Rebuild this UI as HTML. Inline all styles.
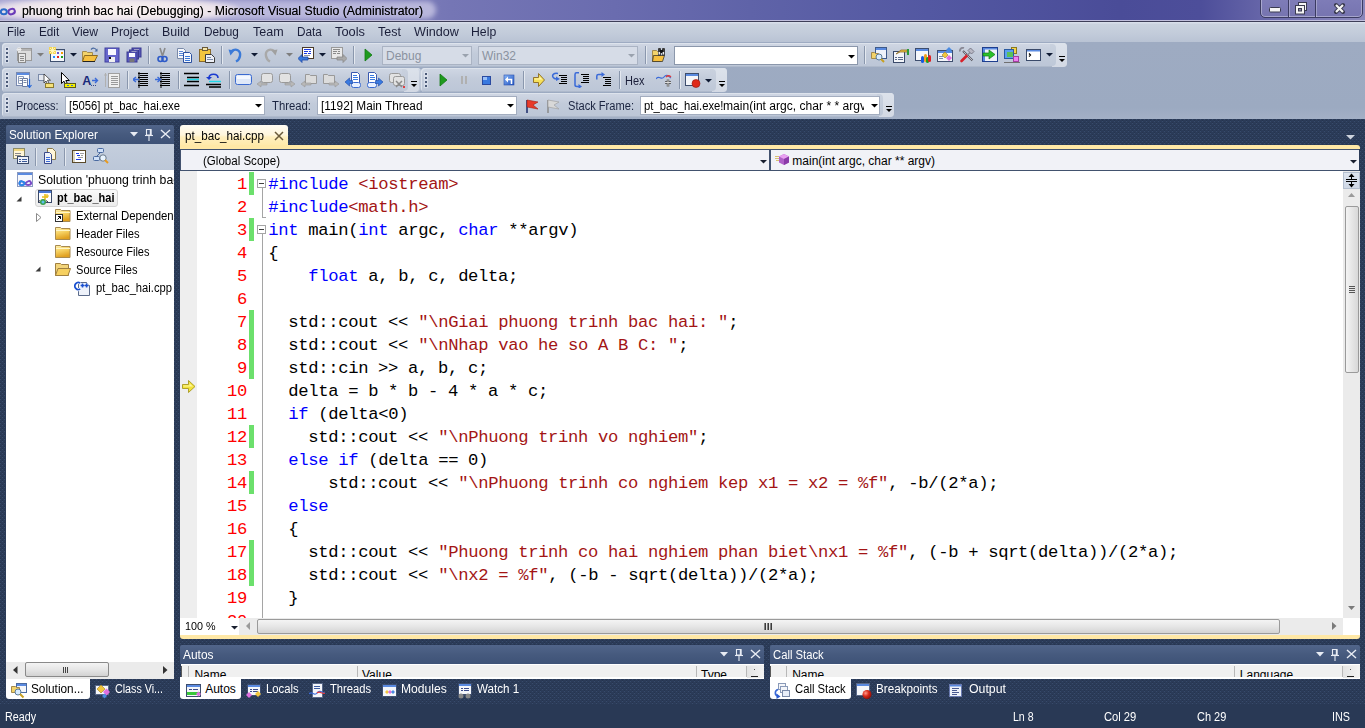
<!DOCTYPE html>
<html><head><meta charset="utf-8">
<style>
*{margin:0;padding:0;box-sizing:border-box}
html,body{width:1365px;height:728px;overflow:hidden}
body{position:relative;background:#293955;font-family:"Liberation Sans",sans-serif;font-size:12px;color:#000}
.a{position:absolute}
.t{position:absolute;white-space:pre;line-height:1}
</style></head><body>
<svg class="a" style="left:0;top:0" width="1365" height="728"><defs><pattern id="dots" x="0" y="0" width="4" height="4" patternUnits="userSpaceOnUse">
<rect width="4" height="4" fill="#2b3b58"/><rect x="2" y="0" width="1" height="1" fill="#26354f"/><rect x="2" y="1" width="1" height="1" fill="#384b6b"/>
<rect x="0" y="2" width="1" height="1" fill="#26354f"/><rect x="0" y="3" width="1" height="1" fill="#384b6b"/></pattern></defs>
<rect x="0" y="119" width="1365" height="585" fill="url(#dots)"/><rect x="0" y="704" width="1365" height="24" fill="#293955"/></svg>
<div class="a" style="left:0px;top:0px;width:1365px;height:21px;background:linear-gradient(90deg,#a4a2d0 0%,#8f8ec4 20%,#7576b5 33%,#6a6caf 45%,#5f63a8 55%,#5358a2 68%,#4a4c98 82%,#4d4e9a 88%,#7a78b4 96%,#8a88bc 100%)"></div>
<div class="a" style="left:-6px;top:1px;width:442px;height:18px;border-radius:9px;background:rgba(190,188,222,0.92);filter:blur(2.5px)"></div>
<div class="a" style="left:-10px;top:-3px;width:250px;height:26px;border-radius:50%;background:radial-gradient(ellipse at center,rgba(255,246,242,0.95) 0%,rgba(248,238,238,0.85) 55%,rgba(230,222,238,0) 100%);filter:blur(2px)"></div>
<div class="a" style="left:0px;top:20px;width:1365px;height:1px;background:#c0bedc"></div>
<div class="a" style="left:0px;top:21px;width:1365px;height:1px;background:#3e3e58"></div>
<svg class="a" style="left:0px;top:6px;" width="18" height="12" viewBox="0 0 18 12"><ellipse cx="11.6" cy="5.6" rx="3.3" ry="2.6" transform="rotate(-20 11.6 5.6)" fill="none" stroke="#6a3ab8" stroke-width="2"/><ellipse cx="3.8" cy="5.8" rx="3" ry="2.5" fill="none" stroke="#2a6ac8" stroke-width="2"/></svg>
<div class="t" style="left:21.5px;top:5.04px;font-size:12px;color:#000;transform:scaleX(1.0213);transform-origin:0 0;text-shadow:0 0 0.6px rgba(0,0,0,0.6);">phuong trinh bac hai (Debugging) - Microsoft Visual Studio (Administrator)</div>
<div class="a" style="left:1260px;top:-3px;width:103px;height:21px;border:1px solid #3b3b62;border-radius:0 0 5px 5px;box-shadow:inset 0 0 0 1px rgba(255,255,255,0.35);background:linear-gradient(#7f7db8,#7674b0)"></div>
<div class="a" style="left:1288px;top:0px;width:1px;height:17px;background:#3b3b62;box-shadow:1px 0 0 rgba(255,255,255,0.3)"></div>
<div class="a" style="left:1315px;top:0px;width:1px;height:17px;background:#3b3b62;box-shadow:1px 0 0 rgba(255,255,255,0.3)"></div>
<svg class="a" style="left:1268px;top:6px;" width="15" height="8" viewBox="0 0 15 8"><rect x="1.5" y="1.5" width="11" height="4.5" rx="1" fill="#f4f4f4" stroke="#3a3a50" stroke-width="1"/></svg>
<svg class="a" style="left:1294px;top:1px;" width="15" height="14" viewBox="0 0 15 14"><rect x="4.5" y="1.5" width="8" height="8" fill="#f4f4f4" stroke="#3a3a50"/><rect x="1.5" y="4.5" width="9" height="8.5" fill="#f4f4f4" stroke="#3a3a50"/><rect x="4.5" y="7.5" width="3" height="2.5" fill="#8a8aa8" stroke="#3a3a50"/></svg>
<svg class="a" style="left:1333px;top:2px;" width="13" height="12" viewBox="0 0 13 12"><path d="M3 3 L10 10 M10 3 L3 10" stroke="#3a3a50" stroke-width="4" stroke-linecap="round"/><path d="M3 3 L10 10 M10 3 L3 10" stroke="#f4f4f4" stroke-width="2.2" stroke-linecap="butt"/></svg>
<div class="a" style="left:0px;top:22px;width:1365px;height:20px;background:linear-gradient(#d8deea 0,#d8deea 1px,#cad2df 2px,#c2cbda 60%,#b9c3d4)"></div>
<div class="t" style="left:6.7px;top:25.74px;font-size:12px;color:#1b1f3a;transform:scaleX(0.9512);transform-origin:0 0;">File</div>
<div class="t" style="left:38.8px;top:25.74px;font-size:12px;color:#1b1f3a;transform:scaleX(0.9764);transform-origin:0 0;">Edit</div>
<div class="t" style="left:72.30000000000001px;top:25.74px;font-size:12px;color:#1b1f3a;transform:scaleX(1.0118);transform-origin:0 0;">View</div>
<div class="t" style="left:111.4px;top:25.74px;font-size:12px;color:#1b1f3a;transform:scaleX(1.0091);transform-origin:0 0;">Project</div>
<div class="t" style="left:162.4px;top:25.74px;font-size:12px;color:#1b1f3a;transform:scaleX(1.0342);transform-origin:0 0;">Build</div>
<div class="t" style="left:203.6px;top:25.74px;font-size:12px;color:#1b1f3a;transform:scaleX(0.9837);transform-origin:0 0;">Debug</div>
<div class="t" style="left:252.70000000000002px;top:25.74px;font-size:12px;color:#1b1f3a;transform:scaleX(1.0428);transform-origin:0 0;">Team</div>
<div class="t" style="left:296.5px;top:25.74px;font-size:12px;color:#1b1f3a;transform:scaleX(0.9819);transform-origin:0 0;">Data</div>
<div class="t" style="left:334.59999999999997px;top:25.74px;font-size:12px;color:#1b1f3a;transform:scaleX(1.0708);transform-origin:0 0;">Tools</div>
<div class="t" style="left:377.5px;top:25.74px;font-size:12px;color:#1b1f3a;transform:scaleX(1.0402);transform-origin:0 0;">Test</div>
<div class="t" style="left:413.7px;top:25.74px;font-size:12px;color:#1b1f3a;transform:scaleX(1.0495);transform-origin:0 0;">Window</div>
<div class="t" style="left:471.4px;top:25.74px;font-size:12px;color:#1b1f3a;transform:scaleX(1.0208);transform-origin:0 0;">Help</div>
<div class="a" style="left:0px;top:42px;width:1365px;height:77px;background:linear-gradient(#9eabc2,#9caac1 85%,#a3b0c6)"></div>
<div class="a" style="left:2px;top:43px;width:1065px;height:24px;border-radius:4px;background:linear-gradient(#d0d7e4,#c2cbda 45%,#bcc6d7);box-shadow:inset 1px 1px 0 #dde3ec,inset 0 -1px 0 #aeb9cb"></div>
<div class="a" style="left:6px;top:48px;width:2px;height:2px;background:#4b5a78;box-shadow:0 0 1px 1px rgba(235,240,248,0.6)"></div>
<div class="a" style="left:6px;top:52px;width:2px;height:2px;background:#4b5a78;box-shadow:0 0 1px 1px rgba(235,240,248,0.6)"></div>
<div class="a" style="left:6px;top:56px;width:2px;height:2px;background:#4b5a78;box-shadow:0 0 1px 1px rgba(235,240,248,0.6)"></div>
<div class="a" style="left:6px;top:60px;width:2px;height:2px;background:#4b5a78;box-shadow:0 0 1px 1px rgba(235,240,248,0.6)"></div>
<div class="a" style="left:2px;top:68px;width:419px;height:24px;border-radius:4px;background:linear-gradient(#d0d7e4,#c2cbda 45%,#bcc6d7);box-shadow:inset 1px 1px 0 #dde3ec,inset 0 -1px 0 #aeb9cb"></div>
<div class="a" style="left:6px;top:73px;width:2px;height:2px;background:#4b5a78;box-shadow:0 0 1px 1px rgba(235,240,248,0.6)"></div>
<div class="a" style="left:6px;top:77px;width:2px;height:2px;background:#4b5a78;box-shadow:0 0 1px 1px rgba(235,240,248,0.6)"></div>
<div class="a" style="left:6px;top:81px;width:2px;height:2px;background:#4b5a78;box-shadow:0 0 1px 1px rgba(235,240,248,0.6)"></div>
<div class="a" style="left:6px;top:85px;width:2px;height:2px;background:#4b5a78;box-shadow:0 0 1px 1px rgba(235,240,248,0.6)"></div>
<div class="a" style="left:421px;top:68px;width:306px;height:24px;border-radius:4px;background:linear-gradient(#d0d7e4,#c2cbda 45%,#bcc6d7);box-shadow:inset 1px 1px 0 #dde3ec,inset 0 -1px 0 #aeb9cb"></div>
<div class="a" style="left:425px;top:73px;width:2px;height:2px;background:#4b5a78;box-shadow:0 0 1px 1px rgba(235,240,248,0.6)"></div>
<div class="a" style="left:425px;top:77px;width:2px;height:2px;background:#4b5a78;box-shadow:0 0 1px 1px rgba(235,240,248,0.6)"></div>
<div class="a" style="left:425px;top:81px;width:2px;height:2px;background:#4b5a78;box-shadow:0 0 1px 1px rgba(235,240,248,0.6)"></div>
<div class="a" style="left:425px;top:85px;width:2px;height:2px;background:#4b5a78;box-shadow:0 0 1px 1px rgba(235,240,248,0.6)"></div>
<div class="a" style="left:2px;top:93px;width:892px;height:24px;border-radius:4px;background:linear-gradient(#d0d7e4,#c2cbda 45%,#bcc6d7);box-shadow:inset 1px 1px 0 #dde3ec,inset 0 -1px 0 #aeb9cb"></div>
<div class="a" style="left:6px;top:98px;width:2px;height:2px;background:#4b5a78;box-shadow:0 0 1px 1px rgba(235,240,248,0.6)"></div>
<div class="a" style="left:6px;top:102px;width:2px;height:2px;background:#4b5a78;box-shadow:0 0 1px 1px rgba(235,240,248,0.6)"></div>
<div class="a" style="left:6px;top:106px;width:2px;height:2px;background:#4b5a78;box-shadow:0 0 1px 1px rgba(235,240,248,0.6)"></div>
<div class="a" style="left:6px;top:110px;width:2px;height:2px;background:#4b5a78;box-shadow:0 0 1px 1px rgba(235,240,248,0.6)"></div>
<div class="a" style="left:1052px;top:43px;width:15px;height:24px;border-radius:0 4px 4px 0;background:linear-gradient(#dce2eb,#d3d9e4)"></div>
<div class="a" style="left:1050px;top:44px;width:6px;height:22px;border-radius:0 4px 4px 0;background:linear-gradient(#c9d1de,#bec8d8)"></div>
<svg class="a" style="left:1059px;top:56px;" width="7" height="7" viewBox="0 0 7 7"><rect x="0" y="0" width="6" height="1" fill="#000"/><path d="M0 3 H6 L3 6 Z" fill="#000"/></svg>
<div class="a" style="left:404px;top:68px;width:15px;height:24px;border-radius:0 4px 4px 0;background:linear-gradient(#dce2eb,#d3d9e4)"></div>
<div class="a" style="left:402px;top:69px;width:6px;height:22px;border-radius:0 4px 4px 0;background:linear-gradient(#c9d1de,#bec8d8)"></div>
<svg class="a" style="left:411px;top:81px;" width="7" height="7" viewBox="0 0 7 7"><rect x="0" y="0" width="6" height="1" fill="#000"/><path d="M0 3 H6 L3 6 Z" fill="#000"/></svg>
<div class="a" style="left:712px;top:68px;width:15px;height:24px;border-radius:0 4px 4px 0;background:linear-gradient(#dce2eb,#d3d9e4)"></div>
<div class="a" style="left:710px;top:69px;width:6px;height:22px;border-radius:0 4px 4px 0;background:linear-gradient(#c9d1de,#bec8d8)"></div>
<svg class="a" style="left:719px;top:81px;" width="7" height="7" viewBox="0 0 7 7"><rect x="0" y="0" width="6" height="1" fill="#000"/><path d="M0 3 H6 L3 6 Z" fill="#000"/></svg>
<div class="a" style="left:879px;top:93px;width:15px;height:24px;border-radius:0 4px 4px 0;background:linear-gradient(#dce2eb,#d3d9e4)"></div>
<div class="a" style="left:877px;top:94px;width:6px;height:22px;border-radius:0 4px 4px 0;background:linear-gradient(#c9d1de,#bec8d8)"></div>
<svg class="a" style="left:886px;top:106px;" width="7" height="7" viewBox="0 0 7 7"><rect x="0" y="0" width="6" height="1" fill="#000"/><path d="M0 3 H6 L3 6 Z" fill="#000"/></svg>
<svg class="a" style="left:16px;top:47px;" width="16" height="16" viewBox="0 0 16 16"><rect x="1.5" y="1.5" width="14" height="12" fill="#dcdcdc" stroke="#9a9a9a"/><rect x="2" y="2" width="13" height="2" fill="#b4b4b4"/><rect x="2.5" y="6.5" width="7" height="9" fill="#e6e6e6" stroke="#8a8a8a"/><path d="M4 9.5h4M4 11.5h4M4 13.5h4" stroke="#8a8a8a"/><path d="M3 0v5M0.5 2.5h5M1 1l4 3M5 1l-4 3" stroke="#f4f4f4" stroke-width="0.9"/></svg>
<svg class="a" style="left:37px;top:53px;" width="7" height="4" viewBox="0 0 7 4"><path d="M0 0 H7 L3.5 3.5 Z" fill="#7d7d7d"/></svg>
<svg class="a" style="left:49px;top:47px;" width="16" height="16" viewBox="0 0 16 16"><rect x="1.5" y="2.5" width="14" height="12" fill="#f4f6fb" stroke="#3e4f6e"/><rect x="2" y="3" width="13" height="1" fill="#c8d4ea"/><rect x="8" y="5" width="2" height="2" fill="#6a5acd"/><rect x="12" y="5" width="2" height="2" fill="#f59b00"/><rect x="4" y="9" width="2" height="2" fill="#1e90ff"/><rect x="8" y="9" width="2" height="2" fill="#e8201c"/><rect x="12" y="9" width="2" height="2" fill="#1ea01e"/><rect x="0" y="0" width="7" height="7" fill="#f6d54a" opacity="0.9"/><path d="M3.5 0v7M0 3.5h7M1 1l5 5M6 1l-5 5" stroke="#fff8c0" stroke-width="0.9"/></svg>
<svg class="a" style="left:70px;top:53px;" width="7" height="4" viewBox="0 0 7 4"><path d="M0 0 H7 L3.5 3.5 Z" fill="#0f1a33"/></svg>
<svg class="a" style="left:82px;top:47px;" width="16" height="16" viewBox="0 0 16 16"><path d="M0.5 4.5h4l1 1h5v9h-10z" fill="#f3d36a" stroke="#a48a4c"/><path d="M2.5 8.5h13l-3 6h-12z" fill="#f6c040" stroke="#8c6a20"/><path d="M1 14.5h12" stroke="#222" /><path d="M9 2.5c2-2 4.5-1.5 5.5 0.5" fill="none" stroke="#4a6aa0" stroke-width="1.2"/><path d="M15.5 1.5v3h-3z" fill="#4a6aa0"/></svg>
<svg class="a" style="left:104px;top:47px;" width="16" height="16" viewBox="0 0 16 16"><rect x="1" y="1" width="14" height="14" fill="#6666cc" stroke="#4040a0"/><rect x="4" y="2" width="8" height="6" fill="#f8f8ff"/><rect x="5" y="10" width="6" height="5" fill="#f0f0f0"/><rect x="5" y="10" width="2" height="2" fill="#111"/></svg>
<svg class="a" style="left:126px;top:47px;" width="16" height="16" viewBox="0 0 16 16"><rect x="6" y="1" width="9" height="9" fill="#5656b8" stroke="#3a3a90"/><rect x="8" y="2" width="5" height="1.5" fill="#fff"/><rect x="3.5" y="3" width="9" height="9" fill="#5858bc" stroke="#3a3a90"/><rect x="5.5" y="4" width="5" height="1.5" fill="#fff"/><rect x="1" y="5" width="10" height="10" fill="#5a5ac0" stroke="#3a3a90"/><rect x="3" y="6" width="6" height="4" fill="#f8f8ff"/><rect x="3.5" y="11.5" width="5" height="3.5" fill="#777"/></svg>
<div class="a" style="left:148px;top:46px;width:1px;height:18px;background:#8a97ad;box-shadow:1px 0 0 #e4e9f0"></div>
<svg class="a" style="left:154px;top:47px;" width="16" height="16" viewBox="0 0 16 16"><path d="M6 1l2.5 8M11 1l-2.5 8" stroke="#8a8a8a" stroke-width="1.6"/><circle cx="6.5" cy="12" r="2.5" fill="none" stroke="#2e5bc8" stroke-width="1.6"/><circle cx="10.5" cy="12" r="2.5" fill="none" stroke="#2e5bc8" stroke-width="1.6"/></svg>
<svg class="a" style="left:177px;top:47px;" width="16" height="16" viewBox="0 0 16 16"><path d="M0.5 1.5h6l2 2v8h-8z" fill="#f6f8fc" stroke="#7a8aa8"/><path d="M2 4.5h4M2 6.5h4M2 8.5h4" stroke="#5a88d8"/><path d="M6.5 5.5h6l2 2v8h-8z" fill="#f6f8fc" stroke="#2a50a0"/><path d="M8 9.5h5M8 11.5h5M8 13.5h5" stroke="#3a78d8"/></svg>
<svg class="a" style="left:199px;top:47px;" width="16" height="16" viewBox="0 0 16 16"><rect x="0.5" y="2.5" width="11" height="12" fill="#f2c53e" stroke="#8a6a2a"/><rect x="3.5" y="0.5" width="5" height="3" fill="#f6e6a8" stroke="#6a5a3a"/><path d="M6.5 7.5h6l3 3v5h-9z" fill="#eef0f6" stroke="#3a3a3a"/><path d="M8 10.5h4M8 12.5h6" stroke="#7a8aa8"/></svg>
<div class="a" style="left:221px;top:46px;width:1px;height:18px;background:#8a97ad;box-shadow:1px 0 0 #e4e9f0"></div>
<svg class="a" style="left:228px;top:47px;" width="16" height="16" viewBox="0 0 16 16"><path d="M3 4.5c5-4 10-1 9 4.5c-0.5 3-2 4.5-4 5.5" fill="none" stroke="#3b7ad8" stroke-width="2.4"/><path d="M0.5 2.5l6 1l-4 5z" fill="#3b7ad8"/></svg>
<svg class="a" style="left:251px;top:53px;" width="7" height="4" viewBox="0 0 7 4"><path d="M0 0 H7 L3.5 3.5 Z" fill="#0f1a33"/></svg>
<svg class="a" style="left:262px;top:47px;" width="16" height="16" viewBox="0 0 16 16"><path d="M13 4.5c-5-4-10-1-9 4.5c0.5 3 2 4.5 4 5.5" fill="none" stroke="#a9a9a9" stroke-width="2.4"/><path d="M15.5 2.5l-6 1l4 5z" fill="#a0a0a0"/></svg>
<svg class="a" style="left:286px;top:53px;" width="7" height="4" viewBox="0 0 7 4"><path d="M0 0 H7 L3.5 3.5 Z" fill="#7d7d7d"/></svg>
<svg class="a" style="left:298px;top:47px;" width="16" height="16" viewBox="0 0 16 16"><rect x="4.5" y="0.5" width="11" height="11" fill="#fff" stroke="#4a3a2a"/><path d="M6 2.5h7M6 4.5h4M11 4.5h2M6 6.5h3M10 6.5h3" stroke="#1a3ae0"/><path d="M6 8.5h6" stroke="#999"/><path d="M0 11.5l4-4v2.5h6v3h-6v2.5z" fill="#3a78d8" stroke="#1c48a8" stroke-width="0.8"/></svg>
<svg class="a" style="left:319px;top:53px;" width="7" height="4" viewBox="0 0 7 4"><path d="M0 0 H7 L3.5 3.5 Z" fill="#0f1a33"/></svg>
<svg class="a" style="left:331px;top:47px;" width="16" height="16" viewBox="0 0 16 16"><rect x="0.5" y="0.5" width="11" height="11" fill="#e9e9e9" stroke="#9a9a9a"/><path d="M2 2.5h7M2 4.5h4M7 4.5h2M2 6.5h3M6 6.5h3" stroke="#8a8a8a"/><path d="M16 11.5l-4-4v2.5h-6v3h6v2.5z" fill="#a9a9a9" stroke="#8a8a8a" stroke-width="0.8"/></svg>
<div class="a" style="left:353px;top:46px;width:1px;height:18px;background:#8a97ad;box-shadow:1px 0 0 #e4e9f0"></div>
<svg class="a" style="left:361px;top:47px;" width="16" height="16" viewBox="0 0 16 16"><path d="M4 2l7 6l-7 6z" fill="#1e9a1e" stroke="#137a13" stroke-width="0.8"/></svg>
<div class="a" style="left:382px;top:46px;width:90px;height:19px;background:#d6dce7;border:1px solid #aab3c3"></div>
<div class="t" style="left:386px;top:49.84px;font-size:12px;color:#8a92a0;">Debug</div>
<svg class="a" style="left:462px;top:54px;" width="7" height="4" viewBox="0 0 7 4"><path d="M0 0 H7 L3.5 3.5 Z" fill="#9aa2ae"/></svg>
<div class="a" style="left:478px;top:46px;width:160px;height:19px;background:#d6dce7;border:1px solid #aab3c3"></div>
<div class="t" style="left:482px;top:49.84px;font-size:12px;color:#8a92a0;">Win32</div>
<svg class="a" style="left:628px;top:54px;" width="7" height="4" viewBox="0 0 7 4"><path d="M0 0 H7 L3.5 3.5 Z" fill="#9aa2ae"/></svg>
<div class="a" style="left:645px;top:46px;width:1px;height:18px;background:#8a97ad;box-shadow:1px 0 0 #e4e9f0"></div>
<svg class="a" style="left:651px;top:47px;" width="16" height="16" viewBox="0 0 16 16"><path d="M1.5 3.5h4l1 1h3v10h-8z" fill="#f3d36a" stroke="#a48a4c"/><path d="M2.5 8.5h11l-2 6h-10z" fill="#f6c040" stroke="#222" stroke-width="0.7"/><rect x="7" y="1" width="3" height="8" rx="1" fill="#3a3a3a"/><rect x="11" y="1" width="3" height="8" rx="1" fill="#3a3a3a"/><rect x="9" y="3" width="3" height="3" fill="#111"/><rect x="7.6" y="5" width="1.5" height="2.5" fill="#eee"/><rect x="11.6" y="5" width="1.5" height="2.5" fill="#eee"/></svg>
<div class="a" style="left:674px;top:46px;width:184px;height:19px;background:#fff;border:1px solid #8b97ab"></div>
<svg class="a" style="left:848px;top:55px;" width="7" height="4" viewBox="0 0 7 4"><path d="M0 0 H7 L3.5 3.5 Z" fill="#000"/></svg>
<div class="a" style="left:864px;top:46px;width:1px;height:18px;background:#8a97ad;box-shadow:1px 0 0 #e4e9f0"></div>
<svg class="a" style="left:871px;top:47px;" width="16" height="16" viewBox="0 0 16 16"><rect x="4.5" y="0.5" width="11" height="11" fill="#eef2fa" stroke="#3e5a8a"/><rect x="5" y="1" width="10" height="2" fill="#5a8ae0"/><path d="M0.5 5.5h3l1 1h3v5h-7z" fill="#f3d36a" stroke="#a48a4c"/><circle cx="8" cy="10" r="3" fill="#d8ecff" stroke="#5a7a9a"/><path d="M10 12l3 3" stroke="#c8a020" stroke-width="2"/></svg>
<svg class="a" style="left:893px;top:47px;" width="16" height="16" viewBox="0 0 16 16"><rect x="0.5" y="4.5" width="11" height="11" fill="#f4f6fa" stroke="#3a4a6a"/><path d="M2 10.5h2M5 10.5h5M2 12.5h2M5 12.5h5" stroke="#5a6a8a"/><path d="M3 7l5-4h6l1 2h-8z" fill="#f2c53e" stroke="#8a6a2a" stroke-width="0.8"/><rect x="14" y="2" width="2" height="6" fill="#2a9a3a"/></svg>
<svg class="a" style="left:915px;top:47px;" width="16" height="16" viewBox="0 0 16 16"><rect x="0.5" y="1.5" width="13" height="12" fill="#f4f6fa" stroke="#3e4e6e"/><rect x="1" y="2" width="12" height="2" fill="#5a8ae0"/><rect x="6" y="9" width="3" height="7" rx="1.5" fill="#1a5ae0"/><rect x="9" y="7" width="3" height="8" rx="1.5" fill="#f0a020"/><rect x="11" y="10" width="3" height="6" rx="1.5" fill="#1ea01e"/><rect x="13" y="8" width="3" height="7" rx="1.5" fill="#e02020"/></svg>
<svg class="a" style="left:937px;top:47px;" width="16" height="16" viewBox="0 0 16 16"><rect x="0.5" y="3.5" width="15" height="11" fill="#f4f6fa" stroke="#3e4e6e"/><rect x="1" y="4" width="14" height="2" fill="#5a8ae0"/><path d="M2 9.5h4M2 11.5h4" stroke="#7a8aa8"/><path d="M5 8l3-3l3 3l-3 3z" fill="#f2c53e" stroke="#a08020" stroke-width="0.6"/><path d="M9 11l3-3l3 3l-3 3z" fill="#e070e0"/><path d="M9 3l3-3l3 3l-3 3z" fill="#4a8ae0"/></svg>
<svg class="a" style="left:959px;top:47px;" width="16" height="16" viewBox="0 0 16 16"><path d="M4 4L13.5 13.5" stroke="#55555f" stroke-width="2"/><path d="M4.5 4.5L13.5 13.5" stroke="#e8e8f0" stroke-width="0.7"/><path d="M1 4.5A3 3 0 0 1 5 1" fill="none" stroke="#8a8a96" stroke-width="1.8"/><path d="M2.5 14L8 8.5" stroke="#d8202a" stroke-width="2.6" stroke-linecap="round"/><path d="M8 8.5L11 5.5" stroke="#8a8a96" stroke-width="1.4"/><path d="M9 3.5L11.5 1L15 4.5L12.5 7z" fill="#b8b8c4" stroke="#6a6a78" stroke-width="0.8"/></svg>
<svg class="a" style="left:982px;top:47px;" width="16" height="16" viewBox="0 0 16 16"><rect x="0.5" y="0.5" width="15" height="14" fill="#eef2fa" stroke="#1e3e8e"/><rect x="1" y="1" width="14" height="1.5" fill="#5a8ae0"/><rect x="1" y="2" width="2" height="12" fill="#5a8ae0"/><path d="M1 6h6v-3l6 4.5l-6 4.5v-3h-6z" fill="#2ac22a" stroke="#167a16" stroke-width="0.7"/></svg>
<svg class="a" style="left:1004px;top:47px;" width="16" height="16" viewBox="0 0 16 16"><rect x="7.5" y="0.5" width="5" height="6" fill="#f6d44a" stroke="#8a7a20"/><rect x="0.5" y="2.5" width="9" height="9" fill="#5aa0f0" stroke="#2a5aa0"/><rect x="3" y="5" width="6" height="5" fill="#5ac05a"/><rect x="9.5" y="9.5" width="5" height="5" fill="#f080f0" stroke="#a040a0"/><rect x="0" y="15" width="16" height="1" fill="#707070"/></svg>
<svg class="a" style="left:1026px;top:47px;" width="16" height="16" viewBox="0 0 16 16"><rect x="0.5" y="2.5" width="14" height="11" fill="#fff" stroke="#3a4a6a"/><rect x="1" y="3" width="13" height="1.5" fill="#5a8ae0"/><path d="M3 6.5l1.5 1.5l-1.5 1.5" fill="none" stroke="#000" stroke-width="1.2"/></svg>
<svg class="a" style="left:1046px;top:53px;" width="7" height="4" viewBox="0 0 7 4"><path d="M0 0 H7 L3.5 3.5 Z" fill="#0f1a33"/></svg>
<svg class="a" style="left:16px;top:72px;" width="16" height="16" viewBox="0 0 16 16"><rect x="0.5" y="0.5" width="13" height="13" fill="#f8faff" stroke="#7a8ab0"/><rect x="1" y="1" width="12" height="2" fill="#5a8ae0"/><path d="M2.5 4.5h5v7h-5z" fill="#fff" stroke="#8a9ab8"/><path d="M3.5 6.5h3M3.5 8.5h3" stroke="#7a8aa8"/><path d="M6.5 6.5h5v8h-5z" fill="#fff" stroke="#6a7aa0"/><path d="M7.5 8.5h3M7.5 10.5h3" stroke="#7a8aa8"/><path d="M13.5 7v8M11.5 13l2 2.5l2-2.5" fill="none" stroke="#2a6ad8" stroke-width="1.2"/></svg>
<svg class="a" style="left:38px;top:72px;" width="16" height="16" viewBox="0 0 16 16"><rect x="0.5" y="2.5" width="6" height="6" fill="#e4e8f0" stroke="#7a8aa8"/><path d="M6 2v9l2-2l2 4l1.5-0.8l-2-4h3z" fill="#fff" stroke="#333" stroke-width="0.8"/><rect x="7.5" y="11.5" width="8" height="4" fill="#f6e27a" stroke="#8a7a30"/></svg>
<svg class="a" style="left:60px;top:72px;" width="16" height="16" viewBox="0 0 16 16"><path d="M1.5 0.5v11l2.5-2.3l2.2 4.5l1.8-0.9l-2.2-4.3h3.5z" fill="#fff" stroke="#000" stroke-width="1"/><rect x="4.5" y="11.5" width="11" height="4" fill="#f4f000" stroke="#5a5a20"/><path d="M7 13.5h2M11 13.5h2" stroke="#3a6ad0"/></svg>
<div class="t" style="left:82.2px;top:74.92px;font-size:12.5px;color:#1a2a7a;font-weight:bold;">A</div>
<svg class="a" style="left:91px;top:72px;" width="8" height="16" viewBox="0 0 8 16"><path d="M1 8.5h5M4 6l2.5 2.5L4 11" fill="none" stroke="#3a6ad8" stroke-width="1.4"/><path d="M0 13.5h1M2 13.5h1M4 13.5h1" stroke="#3a4a8a"/></svg>
<svg class="a" style="left:104px;top:72px;" width="16" height="16" viewBox="0 0 16 16"><rect x="4.5" y="1.5" width="11" height="14" fill="#efefef" stroke="#a0a0a0"/><path d="M7 4.5h7M7 6.5h7M7 8.5h7M7 10.5h7M7 12.5h7" stroke="#9a9a9a"/><path d="M1.5 1v14M0 3h3" stroke="#b0b0b0"/></svg>
<div class="a" style="left:126.5px;top:71px;width:1px;height:18px;background:#8a97ad;box-shadow:1px 0 0 #e4e9f0"></div>
<svg class="a" style="left:133px;top:72px;" width="16" height="16" viewBox="0 0 16 16"><path d="M5 1.5h10M7 3.5h8M5 5.5h10M7 7.5h8M5 9.5h10M7 11.5h8M5 13.5h10" stroke="#000" stroke-width="1"/><path d="M6 0v16" stroke="#000"/><path d="M0 7.5h6M3 5l-3 2.5l3 2.5" fill="none" stroke="#3a6ad8" stroke-width="1.4"/></svg>
<svg class="a" style="left:155px;top:72px;" width="16" height="16" viewBox="0 0 16 16"><path d="M5 1.5h10M7 3.5h8M5 5.5h10M7 7.5h8M5 9.5h10M7 11.5h8M5 13.5h10" stroke="#000" stroke-width="1"/><path d="M6 0v16" stroke="#000"/><path d="M0 7.5h5M2.5 5l3 2.5l-3 2.5" fill="none" stroke="#3a6ad8" stroke-width="1.4"/></svg>
<div class="a" style="left:177.5px;top:71px;width:1px;height:18px;background:#8a97ad;box-shadow:1px 0 0 #e4e9f0"></div>
<svg class="a" style="left:184px;top:72px;" width="16" height="16" viewBox="0 0 16 16"><path d="M0 1.5h15M3 5.5h12M3 9.5h12M0 13.5h15" stroke="#000" stroke-width="1.4"/><path d="M3 7.5h12" stroke="#20d8e8" stroke-width="1.4"/></svg>
<svg class="a" style="left:206px;top:72px;" width="16" height="16" viewBox="0 0 16 16"><path d="M3 6c0-5 9-5 9 0" fill="none" stroke="#1a3ad0" stroke-width="1.6"/><path d="M0 5l3 3l3-3z" fill="#1a3ad0"/><path d="M3 9.5h12" stroke="#20d8e8" stroke-width="1.4"/><path d="M0 12.5h15M3 15h12" stroke="#000" stroke-width="1.4"/></svg>
<div class="a" style="left:228.5px;top:71px;width:1px;height:18px;background:#8a97ad;box-shadow:1px 0 0 #e4e9f0"></div>
<svg class="a" style="left:235px;top:72px;" width="17" height="16" viewBox="0 0 17 16"><rect x="0.5" y="2.5" width="16" height="10" rx="2" fill="#dfe8f8" stroke="#3a6ad0"/><rect x="2" y="4" width="13" height="3" fill="#f4f8ff"/></svg>
<svg class="a" style="left:257px;top:72px;" width="16" height="16" viewBox="0 0 16 16"><rect x="4.5" y="1.5" width="11" height="9" rx="2" fill="#e2e2e2" stroke="#999"/><path d="M0 12l4-3v2h6v2h-6v2z" fill="#b8b8b8" stroke="#999" stroke-width="0.6"/></svg>
<svg class="a" style="left:279px;top:72px;" width="16" height="16" viewBox="0 0 16 16"><rect x="0.5" y="1.5" width="11" height="9" rx="2" fill="#e2e2e2" stroke="#999"/><path d="M16 12l-4-3v2h-6v2h6v2z" fill="#b8b8b8" stroke="#999" stroke-width="0.6"/></svg>
<svg class="a" style="left:301px;top:72px;" width="16" height="16" viewBox="0 0 16 16"><path d="M4.5 2.5h4l1 1h6v8h-11z" fill="#dcdcdc" stroke="#999"/><path d="M0 12l4-3v2h6v2h-6v2z" fill="#b8b8b8" stroke="#999" stroke-width="0.6"/></svg>
<svg class="a" style="left:323px;top:72px;" width="16" height="16" viewBox="0 0 16 16"><path d="M0.5 2.5h4l1 1h6v8h-11z" fill="#dcdcdc" stroke="#999"/><path d="M16 12l-4-3v2h-6v2h6v2z" fill="#b8b8b8" stroke="#999" stroke-width="0.6"/></svg>
<svg class="a" style="left:345px;top:72px;" width="16" height="16" viewBox="0 0 16 16"><path d="M6.5 0.5h6l2 2v9h-8z" fill="#fff" stroke="#3a5ab0"/><path d="M8 3.5h4M8 5.5h5M8 7.5h5" stroke="#3a7ae0"/><rect x="6.5" y="10.5" width="9" height="5" rx="2" fill="#e8f0ff" stroke="#3a6ad0"/><path d="M0 10l4.5-4v2.5h3v3h-3v2.5z" fill="#3a7ae0" stroke="#1c48a8" stroke-width="0.6"/></svg>
<svg class="a" style="left:367px;top:72px;" width="16" height="16" viewBox="0 0 16 16"><path d="M1.5 0.5h6l2 2v9h-8z" fill="#fff" stroke="#3a5ab0"/><path d="M3 3.5h4M3 5.5h5M3 7.5h5" stroke="#3a7ae0"/><rect x="0.5" y="10.5" width="9" height="5" rx="2" fill="#e8f0ff" stroke="#3a6ad0"/><path d="M16 10l-4.5-4v2.5h-3v3h3v2.5z" fill="#3a7ae0" stroke="#1c48a8" stroke-width="0.6"/></svg>
<svg class="a" style="left:389px;top:72px;" width="16" height="16" viewBox="0 0 16 16"><rect x="0.5" y="1.5" width="11" height="9" rx="2" fill="#e2e2e2" stroke="#999"/><rect x="4.5" y="4.5" width="11" height="9" rx="2" fill="#e2e2e2" stroke="#999"/><path d="M7 9l6 6M13 9l-6 6" stroke="#8a8a8a" stroke-width="1.5"/><rect x="14" y="14" width="2" height="2" fill="#e04040"/></svg>
<svg class="a" style="left:437px;top:72px;" width="16" height="16" viewBox="0 0 16 16"><path d="M3 2l7 6l-7 6z" fill="#1e9a1e" stroke="#137a13" stroke-width="0.8"/></svg>
<svg class="a" style="left:457px;top:72px;" width="16" height="16" viewBox="0 0 16 16"><rect x="4" y="4" width="2" height="8" fill="#b0b0b0"/><rect x="8" y="4" width="2" height="8" fill="#b0b0b0"/></svg>
<svg class="a" style="left:479px;top:72px;" width="16" height="16" viewBox="0 0 16 16"><rect x="3.5" y="4.5" width="8" height="8" fill="#3a7ae0" stroke="#2a4aa0"/><rect x="4" y="5" width="4" height="3" fill="#9ac0f8"/></svg>
<svg class="a" style="left:501px;top:72px;" width="16" height="16" viewBox="0 0 16 16"><defs><linearGradient id="gblue" x1="0" y1="0" x2="1" y2="1"><stop offset="0" stop-color="#8ab8f8"/><stop offset="1" stop-color="#1e50c0"/></linearGradient></defs><rect x="3" y="3" width="10" height="10" fill="url(#gblue)" stroke="#2a50b0" stroke-width="0.6"/><path d="M10.5 12V7.5H6.5" fill="none" stroke="#fff" stroke-width="1.6"/><path d="M4 7.5l3-3v6z" fill="#fff"/></svg>
<div class="a" style="left:523px;top:71px;width:1px;height:18px;background:#8a97ad;box-shadow:1px 0 0 #e4e9f0"></div>
<svg class="a" style="left:530px;top:72px;" width="16" height="16" viewBox="0 0 16 16"><path d="M3.5 5.5h5v-4l6 6.5l-6 6.5v-4h-5z" fill="#f6e05a" stroke="#8a6a20" stroke-width="0.9"/><path d="M4.5 6.5h5v-2l3 3h-8z" fill="#fff6b0"/></svg>
<svg class="a" style="left:551px;top:72px;" width="16" height="16" viewBox="0 0 16 16"><path d="M7 1.5C3 0.5 0.8 3 2 5.2C3 7 5 7.2 6.5 7" fill="none" stroke="#3a6ad8" stroke-width="1.5"/><path d="M5 4.5l4 2.5l-4 2z" fill="#3a6ad8"/><path d="M8 3.5h8M10 5.5h6M10 7.5h6M10 9.5h6M8 11.5h8" stroke="#000" stroke-width="1.2"/></svg>
<svg class="a" style="left:573px;top:72px;" width="16" height="16" viewBox="0 0 16 16"><path d="M6 0.8H3.5Q2 0.8 2 2.5V13Q2 14.5 4 14.5H6" fill="none" stroke="#3a6ad8" stroke-width="1.5"/><path d="M5.5 12l3.5 2.5l-3.5 2.5z" fill="#3a6ad8"/><path d="M8 2.5h8M10 4.5h6M10 6.5h6M10 8.5h6M8 10.5h8" stroke="#000" stroke-width="1.2"/></svg>
<svg class="a" style="left:595px;top:72px;" width="16" height="16" viewBox="0 0 16 16"><path d="M1.8 7.5V4Q1.8 2.5 3.5 2.5H7" fill="none" stroke="#3a6ad8" stroke-width="1.5"/><path d="M6.5 0l3.5 2.5l-3.5 2.5z" fill="#3a6ad8"/><path d="M8 5.5h8M10 7.5h6M10 9.5h6M10 11.5h6M8 13.5h8" stroke="#000" stroke-width="1.2"/></svg>
<div class="a" style="left:618.5px;top:71px;width:1px;height:18px;background:#8a97ad;box-shadow:1px 0 0 #e4e9f0"></div>
<div class="t" style="left:625.4px;top:75.04px;font-size:12px;color:#1b1f3a;transform:scaleX(0.9136);transform-origin:0 0;">Hex</div>
<svg class="a" style="left:656px;top:72px;" width="16" height="16" viewBox="0 0 16 16"><path d="M0 7c3-5 5 2 8-2s5 0 7 1" fill="none" stroke="#3a6ad8" stroke-width="1.2"/><path d="M10 5c2-2 4-1 5 0" fill="none" stroke="#e03a3a" stroke-width="1.2"/><path d="M9 10.5h6M12 7.5v7" stroke="#444" stroke-width="2.4"/><path d="M9 10.5h6M12 7.5v7" stroke="#ddd" stroke-width="1"/></svg>
<div class="a" style="left:678.5px;top:71px;width:1px;height:18px;background:#8a97ad;box-shadow:1px 0 0 #e4e9f0"></div>
<svg class="a" style="left:685px;top:72px;" width="16" height="16" viewBox="0 0 16 16"><rect x="0.5" y="1.5" width="13" height="12" fill="#f4f6fa" stroke="#3e4e6e"/><rect x="1" y="2" width="12" height="2" fill="#5a8ae0"/><circle cx="11" cy="11.5" r="4" fill="#e02a1a" stroke="#901a10" stroke-width="0.6"/></svg>
<svg class="a" style="left:705px;top:79px;" width="7" height="4" viewBox="0 0 7 4"><path d="M0 0 H7 L3.5 3.5 Z" fill="#0f1a33"/></svg>
<div class="t" style="left:16.4px;top:99.64px;font-size:12px;color:#1b2440;transform:scaleX(0.9124);transform-origin:0 0;">Process:</div>
<div class="a" style="left:65px;top:96px;width:200px;height:19px;background:#fff;border:1px solid #a3adbf"></div>
<svg class="a" style="left:255px;top:104px;" width="7" height="4" viewBox="0 0 7 4"><path d="M0 0 H7 L3.5 3.5 Z" fill="#000"/></svg>
<div class="t" style="left:69.4px;top:99.64px;font-size:12px;color:#000;transform:scaleX(0.9398);transform-origin:0 0;">[5056] pt_bac_hai.exe</div>
<div class="t" style="left:272px;top:99.64px;font-size:12px;color:#1b2440;transform:scaleX(0.9430);transform-origin:0 0;">Thread:</div>
<div class="a" style="left:317px;top:96px;width:200px;height:19px;background:#fff;border:1px solid #a3adbf"></div>
<svg class="a" style="left:507px;top:104px;" width="7" height="4" viewBox="0 0 7 4"><path d="M0 0 H7 L3.5 3.5 Z" fill="#000"/></svg>
<div class="t" style="left:321px;top:99.64px;font-size:12px;color:#000;transform:scaleX(0.9857);transform-origin:0 0;">[1192] Main Thread</div>
<svg class="a" style="left:524px;top:98px;" width="16" height="16" viewBox="0 0 16 16"><path d="M3 2v13" stroke="#1a2a6a" stroke-width="1.5"/><path d="M3 2l11 2l-5 3l5 4l-11-2z" fill="#e83a2a" stroke="#a02010" stroke-width="0.6"/></svg>
<svg class="a" style="left:545px;top:98px;" width="16" height="16" viewBox="0 0 16 16"><path d="M3 2v13" stroke="#8a8a8a" stroke-width="1.5"/><path d="M3 2l11 2l-5 3l5 4l-11-2z" fill="#d8d8d8" stroke="#9a9a9a" stroke-width="0.6"/></svg>
<div class="t" style="left:567.5px;top:99.64px;font-size:12px;color:#1b2440;transform:scaleX(0.9249);transform-origin:0 0;">Stack Frame:</div>
<div class="a" style="left:640px;top:96px;width:240px;height:19px;background:#fff;border:1px solid #a3adbf"></div>
<svg class="a" style="left:870px;top:104px;" width="7" height="4" viewBox="0 0 7 4"><path d="M0 0 H7 L3.5 3.5 Z" fill="#000"/></svg>
<div class="t" style="left:644.4px;top:99.64px;font-size:12px;color:#000;transform:scaleX(0.9382);transform-origin:0 0;">pt_bac_hai.exe!</div>
<div class="t" style="left:723px;top:99.64px;font-size:12px;color:#000;transform:scaleX(1.0066);transform-origin:0 0;">main(int argc, char * * argv</div>
<div class="a" style="left:864px;top:97px;width:15px;height:17px;background:#fff"></div>
<svg class="a" style="left:871px;top:104px;" width="7" height="4" viewBox="0 0 7 4"><path d="M0 0 H7 L3.5 3.5 Z" fill="#000"/></svg>
<div class="a" style="left:6px;top:144px;width:168px;height:535px;background:#fff"></div>
<div class="a" style="left:6px;top:125px;width:168px;height:19px;border-radius:2px 2px 0 0;background:linear-gradient(#51658a,#465a7e 50%,#3e5277)"></div>
<div class="t" style="left:8.5px;top:128.64px;font-size:12px;color:#fff;transform:scaleX(0.9738);transform-origin:0 0;">Solution Explorer</div>
<svg class="a" style="left:130px;top:132px;" width="8" height="5" viewBox="0 0 8 5"><path d="M0 0H8L4 4.5Z" fill="#e8ecf4"/></svg>
<svg class="a" style="left:145px;top:128px;" width="8" height="13" viewBox="0 0 8 13"><path d="M1.5 1.5h4.5v5.5h-4.5z" fill="none" stroke="#e8ecf4" stroke-width="1.1"/><path d="M5.6 1.5v5.5" stroke="#e8ecf4" stroke-width="1.6"/><path d="M0 7.5h8" stroke="#e8ecf4" stroke-width="1.1"/><path d="M4 8v5" stroke="#e8ecf4" stroke-width="1.1"/></svg>
<svg class="a" style="left:160px;top:129px;" width="11" height="10" viewBox="0 0 11 10"><path d="M1 1L10 9M10 1L1 9" stroke="#e8ecf4" stroke-width="1.4"/></svg>
<div class="a" style="left:6px;top:144px;width:168px;height:26px;background:linear-gradient(#c4cedd,#bcc7d8)"></div>
<svg class="a" style="left:13px;top:148px;" width="16" height="16" viewBox="0 0 16 16"><rect x="0.5" y="0.5" width="11" height="10" fill="#fff6d8" stroke="#8a8a6a"/><rect x="1" y="1" width="10" height="2" fill="#f0d880"/><path d="M2 5.5h6M2 7.5h6" stroke="#8a8a8a"/><rect x="4.5" y="8.5" width="11" height="7" fill="#eef2fa" stroke="#3a4a6a"/><path d="M6 11.5h2M9 11.5h5M6 13.5h2M9 13.5h5" stroke="#3a5a9a"/></svg>
<div class="a" style="left:35px;top:148px;width:1px;height:18px;background:#8a97ad;box-shadow:1px 0 0 #e4e9f0"></div>
<svg class="a" style="left:42px;top:148px;" width="16" height="16" viewBox="0 0 16 16"><path d="M5.5 0.5h5l3 3v8h-8z" fill="#fff6d8" stroke="#8a7a4a"/><path d="M2.5 4.5h5l2 2v9h-7z" fill="#eef2fa" stroke="#3a4a8a"/><path d="M4 9.5h4M4 11.5h4M4 13.5h4" stroke="#3a6ad8"/></svg>
<div class="a" style="left:64px;top:148px;width:1px;height:18px;background:#8a97ad;box-shadow:1px 0 0 #e4e9f0"></div>
<svg class="a" style="left:72px;top:150px;" width="16" height="16" viewBox="0 0 16 16"><rect x="0.5" y="0.5" width="13" height="12" fill="#fff" stroke="#5a4a2a"/><rect x="1" y="1" width="2" height="11" fill="#d8d4c0"/><path d="M4 3.5h3M5 5.5h3M4 9.5h5" stroke="#1a3ae0"/><path d="M8 3.5h4M9 5.5h2M6 7.5h5" stroke="#a0a0a0"/></svg>
<svg class="a" style="left:93px;top:148px;" width="16" height="16" viewBox="0 0 16 16"><rect x="4.5" y="0.5" width="6" height="4" rx="1" fill="#cfe0f8" stroke="#4a6aa0"/><rect x="0.5" y="8.5" width="6" height="4" rx="1" fill="#cfe0f8" stroke="#4a6aa0"/><path d="M7 5l-3 3" stroke="#4a6aa0"/><circle cx="10" cy="10" r="3.2" fill="#e8f4ff" stroke="#6a7a8a"/><path d="M12 12l3 3" stroke="#e89a20" stroke-width="2"/></svg>
<div class="a" style="left:0;top:0;width:174px;height:662px;overflow:hidden">
<svg class="a" style="left:17px;top:172px;" width="16" height="16" viewBox="0 0 16 16"><rect x="0.5" y="0.5" width="15" height="14" fill="#f6f8fc" stroke="#8a9ac0"/><rect x="1" y="1" width="14" height="2" fill="#5a8ae0"/><path d="M8 11.5C6.5 9 3 8.5 2.5 11S5.5 14 8 11.5S13 8 14 10.5S10 14 8 11.5" fill="none" stroke="#7a4ac8" stroke-width="2"/><path d="M8 11.5C6.5 9 3 8.5 2.5 11S5.5 14 8 11.5" fill="none" stroke="#2a8ae8" stroke-width="2"/></svg>
<div class="t" style="left:38.3px;top:173.74px;font-size:12px;color:#000;transform:scaleX(1.0212);transform-origin:0 0;">Solution 'phuong trinh bac hai' (1 project)</div>
<div class="a" style="left:35px;top:189px;width:83px;height:18px;border:1px solid #d4d4d4;border-radius:3px;background:linear-gradient(#fafafa,#ececec)"></div>
<svg class="a" style="left:16px;top:196px;" width="6" height="6" viewBox="0 0 6 6"><path d="M5.5 0.5V5.5H0.5Z" fill="#3a3a3a"/></svg>
<svg class="a" style="left:38px;top:190px;" width="16" height="16" viewBox="0 0 16 16"><rect x="0.5" y="0.5" width="13" height="12" fill="#fff" stroke="#3a4a6a"/><rect x="1" y="1" width="12" height="2" fill="#4a7ad8"/><path d="M7 4v6M4 7h6" stroke="#e8c020" stroke-width="1.6"/><path d="M9 4v4M7 6h4" stroke="#e8c020" stroke-width="1.2"/><circle cx="5" cy="12" r="3" fill="#3aa04a"/><circle cx="5" cy="12" r="1.5" fill="#5ac0f0"/><path d="M0 12l2-1.5M10 12l-2-1.5" stroke="#333"/></svg>
<div class="t" style="left:57.4px;top:191.74px;font-size:12px;color:#000;font-weight:bold;transform:scaleX(0.9170);transform-origin:0 0;">pt_bac_hai</div>
<svg class="a" style="left:36px;top:213px;" width="6" height="9" viewBox="0 0 6 9"><path d="M0.5 0.5L5 4.5L0.5 8.5Z" fill="#fff" stroke="#8a8a8a"/></svg>
<svg class="a" style="left:55px;top:207px;" width="16" height="16" viewBox="0 0 16 16"><defs><linearGradient id="fg" x1="0" y1="0" x2="0.3" y2="1"><stop offset="0" stop-color="#fff2b0"/><stop offset="0.5" stop-color="#f6d060"/><stop offset="1" stop-color="#e0a020"/></linearGradient></defs><path d="M0.5 2.5h5l1 1h8.5v11h-14.5z" fill="url(#fg)" stroke="#a88a50"/><path d="M1 5.5h14" stroke="#fff6c8"/></svg>
<svg class="a" style="left:55px;top:214px;" width="8" height="8" viewBox="0 0 8 8"><rect x="0.5" y="0.5" width="7" height="7" fill="#fff" stroke="#333"/><path d="M2.5 5.5l3-3M3 2.5h2.5v2.5" fill="none" stroke="#000"/></svg>
<div class="t" style="left:76.4px;top:209.74px;font-size:12px;color:#000;transform:scaleX(0.9510);transform-origin:0 0;">External Dependencies</div>
<svg class="a" style="left:55px;top:225px;" width="16" height="16" viewBox="0 0 16 16"><defs><linearGradient id="fg" x1="0" y1="0" x2="0.3" y2="1"><stop offset="0" stop-color="#fff2b0"/><stop offset="0.5" stop-color="#f6d060"/><stop offset="1" stop-color="#e0a020"/></linearGradient></defs><path d="M0.5 2.5h5l1 1h8.5v11h-14.5z" fill="url(#fg)" stroke="#a88a50"/><path d="M1 5.5h14" stroke="#fff6c8"/></svg>
<div class="t" style="left:76.4px;top:227.74px;font-size:12px;color:#000;transform:scaleX(0.9334);transform-origin:0 0;">Header Files</div>
<svg class="a" style="left:55px;top:243px;" width="16" height="16" viewBox="0 0 16 16"><defs><linearGradient id="fg" x1="0" y1="0" x2="0.3" y2="1"><stop offset="0" stop-color="#fff2b0"/><stop offset="0.5" stop-color="#f6d060"/><stop offset="1" stop-color="#e0a020"/></linearGradient></defs><path d="M0.5 2.5h5l1 1h8.5v11h-14.5z" fill="url(#fg)" stroke="#a88a50"/><path d="M1 5.5h14" stroke="#fff6c8"/></svg>
<div class="t" style="left:76.4px;top:245.74px;font-size:12px;color:#000;transform:scaleX(0.9184);transform-origin:0 0;">Resource Files</div>
<svg class="a" style="left:35px;top:266px;" width="6" height="6" viewBox="0 0 6 6"><path d="M5.5 0.5V5.5H0.5Z" fill="#3a3a3a"/></svg>
<svg class="a" style="left:55px;top:261px;" width="16" height="16" viewBox="0 0 16 16"><path d="M0.5 2.5h5l1 1h7v11h-13z" fill="#f2d47a" stroke="#a08040"/><path d="M3 7.5h12.5l-2.5 7h-12.5z" fill="#f6d060" stroke="#a08040"/></svg>
<div class="t" style="left:76.4px;top:263.74px;font-size:12px;color:#000;transform:scaleX(0.9220);transform-origin:0 0;">Source Files</div>
<svg class="a" style="left:74px;top:280px;" width="16" height="16" viewBox="0 0 16 16"><path d="M4.5 2.5h8l3 3v10h-11z" fill="#eef2fa" stroke="#5a6a8a"/><path d="M12.5 2.5v3h3" fill="#fff" stroke="#5a6a8a"/><g stroke="#fff" stroke-width="3" fill="none"><path d="M6.2 3.2A3.3 3.5 0 1 0 6.2 8.8"/><path d="M6.6 5.5h3.8M8.5 3.6v3.8M10.7 5.5h3.8M12.6 3.6v3.8"/></g><g stroke="#1a50d0" stroke-width="1.7" fill="none"><path d="M6.2 3.2A3.3 3.5 0 1 0 6.2 8.8"/><path d="M6.6 5.5h3.8M8.5 3.6v3.8M10.7 5.5h3.8M12.6 3.6v3.8"/></g></svg>
<div class="t" style="left:95.8px;top:281.74px;font-size:12px;color:#000;transform:scaleX(0.9336);transform-origin:0 0;">pt_bac_hai.cpp</div>
</div>
<div class="a" style="left:180px;top:125px;width:108px;height:22px;border-radius:3px 3px 0 0;background:linear-gradient(#fffcf4,#fff6dc 45%,#ffefbe 55%,#ffe8a6)"></div>
<div class="t" style="left:184.5px;top:129.64px;font-size:12px;color:#000;transform:scaleX(0.9704);transform-origin:0 0;">pt_bac_hai.cpp</div>
<svg class="a" style="left:274px;top:131px;" width="10" height="10" viewBox="0 0 10 10"><path d="M1 1L9 9M9 1L1 9" stroke="#6a5a3a" stroke-width="1.5"/></svg>
<svg class="a" style="left:1346px;top:135px;" width="9" height="5" viewBox="0 0 9 5"><path d="M0 0H9L4.5 4.5Z" fill="#ced4de"/></svg>
<div class="a" style="left:180px;top:145px;width:1180px;height:4px;background:#ffe8a6;border-radius:0 3px 0 0"></div>
<div class="a" style="left:180px;top:149px;width:1179px;height:22px;background:#42526e"></div>
<div class="a" style="left:181px;top:150px;width:588px;height:20px;background:#f1f2f7"></div>
<div class="a" style="left:771px;top:150px;width:588px;height:20px;background:#f1f2f7"></div>
<div class="t" style="left:202.5px;top:155.24px;font-size:12px;color:#000;transform:scaleX(0.9619);transform-origin:0 0;">(Global Scope)</div>
<svg class="a" style="left:760px;top:160px;" width="7" height="4" viewBox="0 0 7 4"><path d="M0 0 H7 L3.5 3.5 Z" fill="#1a2030"/></svg>
<svg class="a" style="left:775px;top:153px;" width="15" height="14" viewBox="0 0 15 14"><path d="M0 3.5h4M0 5.5h4M1 7.5h3" stroke="#d8c070"/><path d="M9 1l5 2.5v6l-5 2.5l-5-2.5v-6z" fill="#b060c8"/><path d="M9 1l5 2.5l-5 2.5l-5-2.5z" fill="#e8a0f0"/><path d="M9 6v6l5-2.5v-6z" fill="#8a3aa8"/></svg>
<div class="t" style="left:792.3px;top:155.24px;font-size:12px;color:#000;">main(int argc, char ** argv)</div>
<svg class="a" style="left:1350px;top:160px;" width="7" height="4" viewBox="0 0 7 4"><path d="M0 0 H7 L3.5 3.5 Z" fill="#1a2030"/></svg>
<div class="a" style="left:180px;top:171px;width:1180px;height:464px;background:#fff"></div>
<div class="a" style="left:180px;top:171px;width:17px;height:447px;background:#eeeeee"></div>
<div class="a" style="left:0;top:0;width:1343px;height:618px;overflow:hidden">
<div class="t" style="left:237px;top:175.62px;font-size:17.2px;color:#ff0000;font-family:'Liberation Mono',monospace;letter-spacing:-0.3200px;">1</div>
<div class="t" style="left:268.2px;top:175.62px;font-size:17.2px;color:#0000ff;font-family:'Liberation Mono',monospace;letter-spacing:-0.3200px;">#include</div>
<div class="t" style="left:348.2px;top:175.62px;font-size:17.2px;color:#a31515;font-family:'Liberation Mono',monospace;letter-spacing:-0.3200px;"> &lt;iostream&gt;</div>
<div class="t" style="left:237px;top:198.62px;font-size:17.2px;color:#ff0000;font-family:'Liberation Mono',monospace;letter-spacing:-0.3200px;">2</div>
<div class="t" style="left:268.2px;top:198.62px;font-size:17.2px;color:#0000ff;font-family:'Liberation Mono',monospace;letter-spacing:-0.3200px;">#include</div>
<div class="t" style="left:348.2px;top:198.62px;font-size:17.2px;color:#a31515;font-family:'Liberation Mono',monospace;letter-spacing:-0.3200px;">&lt;math.h&gt;</div>
<div class="t" style="left:237px;top:221.62px;font-size:17.2px;color:#ff0000;font-family:'Liberation Mono',monospace;letter-spacing:-0.3200px;">3</div>
<div class="t" style="left:268.2px;top:221.62px;font-size:17.2px;color:#0000ff;font-family:'Liberation Mono',monospace;letter-spacing:-0.3200px;">int</div>
<div class="t" style="left:298.2px;top:221.62px;font-size:17.2px;color:#000;font-family:'Liberation Mono',monospace;letter-spacing:-0.3200px;"> main(</div>
<div class="t" style="left:358.2px;top:221.62px;font-size:17.2px;color:#0000ff;font-family:'Liberation Mono',monospace;letter-spacing:-0.3200px;">int</div>
<div class="t" style="left:388.2px;top:221.62px;font-size:17.2px;color:#000;font-family:'Liberation Mono',monospace;letter-spacing:-0.3200px;"> argc, </div>
<div class="t" style="left:458.2px;top:221.62px;font-size:17.2px;color:#0000ff;font-family:'Liberation Mono',monospace;letter-spacing:-0.3200px;">char</div>
<div class="t" style="left:498.2px;top:221.62px;font-size:17.2px;color:#000;font-family:'Liberation Mono',monospace;letter-spacing:-0.3200px;"> **argv)</div>
<div class="t" style="left:237px;top:244.62px;font-size:17.2px;color:#ff0000;font-family:'Liberation Mono',monospace;letter-spacing:-0.3200px;">4</div>
<div class="t" style="left:268.2px;top:244.62px;font-size:17.2px;color:#000;font-family:'Liberation Mono',monospace;letter-spacing:-0.3200px;">{</div>
<div class="t" style="left:237px;top:267.62px;font-size:17.2px;color:#ff0000;font-family:'Liberation Mono',monospace;letter-spacing:-0.3200px;">5</div>
<div class="t" style="left:308.2px;top:267.62px;font-size:17.2px;color:#0000ff;font-family:'Liberation Mono',monospace;letter-spacing:-0.3200px;">float</div>
<div class="t" style="left:358.2px;top:267.62px;font-size:17.2px;color:#000;font-family:'Liberation Mono',monospace;letter-spacing:-0.3200px;"> a, b, c, delta;</div>
<div class="t" style="left:237px;top:290.62px;font-size:17.2px;color:#ff0000;font-family:'Liberation Mono',monospace;letter-spacing:-0.3200px;">6</div>
<div class="t" style="left:237px;top:313.62px;font-size:17.2px;color:#ff0000;font-family:'Liberation Mono',monospace;letter-spacing:-0.3200px;">7</div>
<div class="t" style="left:268.2px;top:313.62px;font-size:17.2px;color:#000;font-family:'Liberation Mono',monospace;letter-spacing:-0.3200px;">  std::cout &lt;&lt; </div>
<div class="t" style="left:418.2px;top:313.62px;font-size:17.2px;color:#a31515;font-family:'Liberation Mono',monospace;letter-spacing:-0.3200px;">"\nGiai phuong trinh bac hai: "</div>
<div class="t" style="left:728.2px;top:313.62px;font-size:17.2px;color:#000;font-family:'Liberation Mono',monospace;letter-spacing:-0.3200px;">;</div>
<div class="t" style="left:237px;top:336.62px;font-size:17.2px;color:#ff0000;font-family:'Liberation Mono',monospace;letter-spacing:-0.3200px;">8</div>
<div class="t" style="left:268.2px;top:336.62px;font-size:17.2px;color:#000;font-family:'Liberation Mono',monospace;letter-spacing:-0.3200px;">  std::cout &lt;&lt; </div>
<div class="t" style="left:418.2px;top:336.62px;font-size:17.2px;color:#a31515;font-family:'Liberation Mono',monospace;letter-spacing:-0.3200px;">"\nNhap vao he so A B C: "</div>
<div class="t" style="left:678.2px;top:336.62px;font-size:17.2px;color:#000;font-family:'Liberation Mono',monospace;letter-spacing:-0.3200px;">;</div>
<div class="t" style="left:237px;top:359.62px;font-size:17.2px;color:#ff0000;font-family:'Liberation Mono',monospace;letter-spacing:-0.3200px;">9</div>
<div class="t" style="left:268.2px;top:359.62px;font-size:17.2px;color:#000;font-family:'Liberation Mono',monospace;letter-spacing:-0.3200px;">  std::cin &gt;&gt; a, b, c;</div>
<div class="t" style="left:227px;top:382.62px;font-size:17.2px;color:#ff0000;font-family:'Liberation Mono',monospace;letter-spacing:-0.3200px;">10</div>
<div class="t" style="left:268.2px;top:382.62px;font-size:17.2px;color:#000;font-family:'Liberation Mono',monospace;letter-spacing:-0.3200px;">  delta = b * b - 4 * a * c;</div>
<div class="t" style="left:227px;top:405.62px;font-size:17.2px;color:#ff0000;font-family:'Liberation Mono',monospace;letter-spacing:-0.3200px;">11</div>
<div class="t" style="left:288.2px;top:405.62px;font-size:17.2px;color:#0000ff;font-family:'Liberation Mono',monospace;letter-spacing:-0.3200px;">if</div>
<div class="t" style="left:308.2px;top:405.62px;font-size:17.2px;color:#000;font-family:'Liberation Mono',monospace;letter-spacing:-0.3200px;"> (delta&lt;0)</div>
<div class="t" style="left:227px;top:428.62px;font-size:17.2px;color:#ff0000;font-family:'Liberation Mono',monospace;letter-spacing:-0.3200px;">12</div>
<div class="t" style="left:268.2px;top:428.62px;font-size:17.2px;color:#000;font-family:'Liberation Mono',monospace;letter-spacing:-0.3200px;">    std::cout &lt;&lt; </div>
<div class="t" style="left:438.2px;top:428.62px;font-size:17.2px;color:#a31515;font-family:'Liberation Mono',monospace;letter-spacing:-0.3200px;">"\nPhuong trinh vo nghiem"</div>
<div class="t" style="left:698.2px;top:428.62px;font-size:17.2px;color:#000;font-family:'Liberation Mono',monospace;letter-spacing:-0.3200px;">;</div>
<div class="t" style="left:227px;top:451.62px;font-size:17.2px;color:#ff0000;font-family:'Liberation Mono',monospace;letter-spacing:-0.3200px;">13</div>
<div class="t" style="left:288.2px;top:451.62px;font-size:17.2px;color:#0000ff;font-family:'Liberation Mono',monospace;letter-spacing:-0.3200px;">else if</div>
<div class="t" style="left:358.2px;top:451.62px;font-size:17.2px;color:#000;font-family:'Liberation Mono',monospace;letter-spacing:-0.3200px;"> (delta == 0)</div>
<div class="t" style="left:227px;top:474.62px;font-size:17.2px;color:#ff0000;font-family:'Liberation Mono',monospace;letter-spacing:-0.3200px;">14</div>
<div class="t" style="left:268.2px;top:474.62px;font-size:17.2px;color:#000;font-family:'Liberation Mono',monospace;letter-spacing:-0.3200px;">      std::cout &lt;&lt; </div>
<div class="t" style="left:458.2px;top:474.62px;font-size:17.2px;color:#a31515;font-family:'Liberation Mono',monospace;letter-spacing:-0.3200px;">"\nPhuong trinh co nghiem kep x1 = x2 = %f"</div>
<div class="t" style="left:888.2px;top:474.62px;font-size:17.2px;color:#000;font-family:'Liberation Mono',monospace;letter-spacing:-0.3200px;">, -b/(2*a);</div>
<div class="t" style="left:227px;top:497.62px;font-size:17.2px;color:#ff0000;font-family:'Liberation Mono',monospace;letter-spacing:-0.3200px;">15</div>
<div class="t" style="left:288.2px;top:497.62px;font-size:17.2px;color:#0000ff;font-family:'Liberation Mono',monospace;letter-spacing:-0.3200px;">else</div>
<div class="t" style="left:227px;top:520.62px;font-size:17.2px;color:#ff0000;font-family:'Liberation Mono',monospace;letter-spacing:-0.3200px;">16</div>
<div class="t" style="left:268.2px;top:520.62px;font-size:17.2px;color:#000;font-family:'Liberation Mono',monospace;letter-spacing:-0.3200px;">  {</div>
<div class="t" style="left:227px;top:543.62px;font-size:17.2px;color:#ff0000;font-family:'Liberation Mono',monospace;letter-spacing:-0.3200px;">17</div>
<div class="t" style="left:268.2px;top:543.62px;font-size:17.2px;color:#000;font-family:'Liberation Mono',monospace;letter-spacing:-0.3200px;">    std::cout &lt;&lt; </div>
<div class="t" style="left:438.2px;top:543.62px;font-size:17.2px;color:#a31515;font-family:'Liberation Mono',monospace;letter-spacing:-0.3200px;">"Phuong trinh co hai nghiem phan biet\nx1 = %f"</div>
<div class="t" style="left:908.2px;top:543.62px;font-size:17.2px;color:#000;font-family:'Liberation Mono',monospace;letter-spacing:-0.3200px;">, (-b + sqrt(delta))/(2*a);</div>
<div class="t" style="left:227px;top:566.62px;font-size:17.2px;color:#ff0000;font-family:'Liberation Mono',monospace;letter-spacing:-0.3200px;">18</div>
<div class="t" style="left:268.2px;top:566.62px;font-size:17.2px;color:#000;font-family:'Liberation Mono',monospace;letter-spacing:-0.3200px;">    std::cout &lt;&lt; </div>
<div class="t" style="left:438.2px;top:566.62px;font-size:17.2px;color:#a31515;font-family:'Liberation Mono',monospace;letter-spacing:-0.3200px;">"\nx2 = %f"</div>
<div class="t" style="left:548.2px;top:566.62px;font-size:17.2px;color:#000;font-family:'Liberation Mono',monospace;letter-spacing:-0.3200px;">, (-b - sqrt(delta))/(2*a);</div>
<div class="t" style="left:227px;top:589.62px;font-size:17.2px;color:#ff0000;font-family:'Liberation Mono',monospace;letter-spacing:-0.3200px;">19</div>
<div class="t" style="left:268.2px;top:589.62px;font-size:17.2px;color:#000;font-family:'Liberation Mono',monospace;letter-spacing:-0.3200px;">  }</div>
<div class="t" style="left:227px;top:612.62px;font-size:17.2px;color:#ff0000;font-family:'Liberation Mono',monospace;letter-spacing:-0.3200px;">20</div>
</div>
<div class="a" style="left:249px;top:172px;width:5px;height:23px;background:#6ce06c"></div>
<div class="a" style="left:249px;top:218px;width:5px;height:23px;background:#6ce06c"></div>
<div class="a" style="left:249px;top:310px;width:5px;height:69px;background:#6ce06c"></div>
<div class="a" style="left:249px;top:425px;width:5px;height:23px;background:#6ce06c"></div>
<div class="a" style="left:249px;top:471px;width:5px;height:23px;background:#6ce06c"></div>
<div class="a" style="left:249px;top:540px;width:5px;height:46px;background:#6ce06c"></div>
<div class="a" style="left:262px;top:171px;width:1px;height:447px;background:#a5a5a5"></div>
<div class="a" style="left:262px;top:171px;width:1px;height:17px;background:#fff"></div>
<div class="a" style="left:262px;top:218px;width:1px;height:8px;background:#fff"></div>
<div class="a" style="left:263px;top:217px;width:3px;height:1px;background:#a5a5a5"></div>
<svg class="a" style="left:257px;top:179px;" width="9" height="9" viewBox="0 0 9 9"><rect x="0.5" y="0.5" width="8" height="8" fill="#fff" stroke="#a5a5a5"/><path d="M2 4.5h5" stroke="#404040"/></svg>
<svg class="a" style="left:257px;top:225px;" width="9" height="9" viewBox="0 0 9 9"><rect x="0.5" y="0.5" width="8" height="8" fill="#fff" stroke="#a5a5a5"/><path d="M2 4.5h5" stroke="#404040"/></svg>
<svg class="a" style="left:182px;top:380px;" width="14" height="13" viewBox="0 0 14 13"><path d="M0.5 4.5h6v-4l6.5 6l-6.5 6v-4h-6z" fill="#f4e43c" stroke="#a89a20" stroke-width="0.9"/><path d="M1.5 5.5h6v-2l3.5 3h-9.5z" fill="#fbf6a0"/></svg>
<div class="a" style="left:1343px;top:171px;width:17px;height:447px;background:#ebebeb"></div>
<div class="a" style="left:1343px;top:172px;width:17px;height:17px;background:linear-gradient(#dde4ee,#cfd8e6);border:1px solid #b4bfcf"></div>
<svg class="a" style="left:1345px;top:173px;" width="13" height="15" viewBox="0 0 13 15"><path d="M6.5 0.5l-3 3.5h6z M6.5 14.5l-3-3.5h6z" fill="#000"/><path d="M1 6.5h11M1 8.5h11" stroke="#000"/><path d="M6.5 3v3M6.5 9v3" stroke="#000"/></svg>
<svg class="a" style="left:1348px;top:193px;" width="7" height="4" viewBox="0 0 7 4"><path d="M0 4L3.5 0L7 4Z" fill="#9a9a9a"/></svg>
<div class="a" style="left:1345px;top:206px;width:14px;height:167px;border:1px solid #9a9a9a;border-radius:2px;background:linear-gradient(90deg,#f4f4f4,#e6e6e6 50%,#d8d8d8)"></div>
<svg class="a" style="left:1347px;top:286px;" width="10" height="8" viewBox="0 0 10 8"><path d="M2 0.5h6M2 2.5h6M2 4.5h6M2 6.5h6" stroke="#555"/></svg>
<svg class="a" style="left:1348px;top:606px;" width="7" height="4" viewBox="0 0 7 4"><path d="M0 0H7L3.5 4Z" fill="#7a7a7a"/></svg>
<div class="a" style="left:180px;top:618px;width:1163px;height:17px;background:#ebebeb"></div>
<div class="a" style="left:180px;top:618px;width:59px;height:17px;background:#fff"></div>
<div class="t" style="left:184.6px;top:621.17px;font-size:11.5px;color:#000;transform:scaleX(0.9353);transform-origin:0 0;">100 %</div>
<svg class="a" style="left:231px;top:626px;" width="7" height="4" viewBox="0 0 7 4"><path d="M0 0 H7 L3.5 3.5 Z" fill="#1a2030"/></svg>
<svg class="a" style="left:246px;top:622px;" width="4" height="8" viewBox="0 0 4 8"><path d="M4 0V8L0 4Z" fill="#9a9a9a"/></svg>
<div class="a" style="left:257px;top:619px;width:1023px;height:15px;border:1px solid #9a9a9a;border-radius:2px;background:linear-gradient(#f4f4f4,#e6e6e6 50%,#d4d4d4)"></div>
<svg class="a" style="left:764px;top:622px;" width="9" height="9" viewBox="0 0 9 9"><path d="M1.2 1v7M4.2 1v7M7.2 1v7" stroke="#333" stroke-width="1.5"/></svg>
<svg class="a" style="left:1332px;top:622px;" width="5" height="8" viewBox="0 0 5 8"><path d="M0 0V8L4.5 4Z" fill="#7a7a7a"/></svg>
<div class="a" style="left:1343px;top:618px;width:17px;height:17px;background:#fff"></div>
<div class="a" style="left:180px;top:635px;width:1180px;height:4px;background:#ffe8a6;border-radius:0 0 3px 3px"></div>
<div class="a" style="left:0;top:0;width:1365px;height:677px;overflow:hidden">
<div class="a" style="left:180px;top:645px;width:584px;height:19px;"></div>
<div class="a" style="left:180px;top:645px;width:584px;height:19px;border-radius:2px 2px 0 0;background:linear-gradient(#51658a,#465a7e 50%,#3e5277)"></div>
<div class="t" style="left:182.5px;top:648.64px;font-size:12px;color:#fff;transform:scaleX(0.9939);transform-origin:0 0;">Autos</div>
<svg class="a" style="left:720px;top:652px;" width="8" height="5" viewBox="0 0 8 5"><path d="M0 0H8L4 4.5Z" fill="#e8ecf4"/></svg>
<svg class="a" style="left:735px;top:648px;" width="8" height="13" viewBox="0 0 8 13"><path d="M1.5 1.5h4.5v5.5h-4.5z" fill="none" stroke="#e8ecf4" stroke-width="1.1"/><path d="M5.6 1.5v5.5" stroke="#e8ecf4" stroke-width="1.6"/><path d="M0 7.5h8" stroke="#e8ecf4" stroke-width="1.1"/><path d="M4 8v5" stroke="#e8ecf4" stroke-width="1.1"/></svg>
<svg class="a" style="left:750px;top:649px;" width="11" height="10" viewBox="0 0 11 10"><path d="M1 1L10 9M10 1L1 9" stroke="#e8ecf4" stroke-width="1.4"/></svg>
<div class="a" style="left:181px;top:664px;width:583px;height:15px;background:linear-gradient(#fff 0,#fff 1px,#f0f0f0 1px)"></div>
<div class="a" style="left:181px;top:666px;width:1px;height:12px;background:#5a5a5a"></div>
<div class="a" style="left:188px;top:666px;width:1px;height:12px;background:#b8b8b8"></div>
<div class="t" style="left:194.4px;top:669.44px;font-size:12px;color:#000;">Name</div>
<div class="a" style="left:357px;top:666px;width:1px;height:12px;background:#b8b8b8"></div>
<div class="t" style="left:362px;top:669.44px;font-size:12px;color:#000;">Value</div>
<div class="a" style="left:696px;top:666px;width:1px;height:12px;background:#b8b8b8"></div>
<div class="t" style="left:701px;top:669.44px;font-size:12px;color:#000;">Type</div>
<div class="a" style="left:746px;top:666px;width:1px;height:12px;background:#b8b8b8"></div>
<div class="a" style="left:770px;top:645px;width:590px;height:19px;border-radius:2px 2px 0 0;background:linear-gradient(#51658a,#465a7e 50%,#3e5277)"></div>
<div class="t" style="left:772.5px;top:648.64px;font-size:12px;color:#fff;transform:scaleX(0.9383);transform-origin:0 0;">Call Stack</div>
<svg class="a" style="left:1316px;top:652px;" width="8" height="5" viewBox="0 0 8 5"><path d="M0 0H8L4 4.5Z" fill="#e8ecf4"/></svg>
<svg class="a" style="left:1331px;top:648px;" width="8" height="13" viewBox="0 0 8 13"><path d="M1.5 1.5h4.5v5.5h-4.5z" fill="none" stroke="#e8ecf4" stroke-width="1.1"/><path d="M5.6 1.5v5.5" stroke="#e8ecf4" stroke-width="1.6"/><path d="M0 7.5h8" stroke="#e8ecf4" stroke-width="1.1"/><path d="M4 8v5" stroke="#e8ecf4" stroke-width="1.1"/></svg>
<svg class="a" style="left:1346px;top:649px;" width="11" height="10" viewBox="0 0 11 10"><path d="M1 1L10 9M10 1L1 9" stroke="#e8ecf4" stroke-width="1.4"/></svg>
<div class="a" style="left:770px;top:664px;width:590px;height:15px;background:linear-gradient(#fff 0,#fff 1px,#f0f0f0 1px)"></div>
<div class="a" style="left:770px;top:666px;width:1px;height:12px;background:#5a5a5a"></div>
<div class="a" style="left:786px;top:666px;width:1px;height:12px;background:#b8b8b8"></div>
<div class="t" style="left:792.2px;top:669.44px;font-size:12px;color:#000;">Name</div>
<div class="a" style="left:1234px;top:666px;width:1px;height:12px;background:#b8b8b8"></div>
<div class="t" style="left:1239.8px;top:669.44px;font-size:12px;color:#000;">Language</div>
<div class="a" style="left:1342px;top:666px;width:1px;height:12px;background:#b8b8b8"></div>
</div>
<div class="a" style="left:180px;top:677px;width:584px;height:2px;background:#fff"></div>
<div class="a" style="left:770px;top:677px;width:590px;height:2px;background:#fff"></div>
<div class="a" style="left:747px;top:666px;width:16px;height:12px;background:linear-gradient(90deg,#e4e4e4,#f2f2f2)"></div>
<div class="a" style="left:754px;top:669px;width:1px;height:1px;background:#555"></div>
<div class="a" style="left:751px;top:676px;width:7px;height:1px;background:#222"></div>
<div class="a" style="left:1343px;top:666px;width:16px;height:12px;background:linear-gradient(90deg,#e4e4e4,#f2f2f2)"></div>
<div class="a" style="left:1350px;top:669px;width:1px;height:1px;background:#555"></div>
<div class="a" style="left:1347px;top:676px;width:7px;height:1px;background:#222"></div>
<div class="a" style="left:6px;top:679px;width:84px;height:20px;background:#fff;border-radius:0 0 3px 3px"></div>
<svg class="a" style="left:11px;top:683px;" width="16" height="16" viewBox="0 0 16 16"><rect x="5.5" y="0.5" width="10" height="9" fill="#f4f6fa" stroke="#4a6aa0"/><rect x="6" y="1" width="9" height="2" fill="#5a8ae0"/><path d="M0.5 3.5h4l1 1h3v5h-8z" fill="#f3d36a" stroke="#a48a4c"/><circle cx="7" cy="9" r="3" fill="#d8ecff" stroke="#5a7a9a"/><path d="M9 11l3.5 3.5" stroke="#c8a020" stroke-width="2"/></svg>
<div class="t" style="left:31px;top:682.74px;font-size:12px;color:#000;transform:scaleX(0.9836);transform-origin:0 0;">Solution...</div>
<svg class="a" style="left:95px;top:683px;" width="16" height="16" viewBox="0 0 16 16"><rect x="0.5" y="2.5" width="13" height="9" fill="#f4f6fa" stroke="#5a6a8a"/><path d="M2 6l4-4l4 4l-4 4z" fill="#f2c53e" stroke="#a08020" stroke-width="0.6"/><path d="M8 9l3.5-3.5l3.5 3.5l-3.5 3.5z" fill="#e070e0"/><path d="M7 13l2.5-2.5l2.5 2.5l-2.5 2.5z" fill="#4a8ae0"/></svg>
<div class="t" style="left:115.4px;top:682.74px;font-size:12px;color:#fff;transform:scaleX(0.8922);transform-origin:0 0;">Class Vi...</div>
<div class="a" style="left:180px;top:679px;width:61px;height:20px;background:#fff;border-radius:0 0 3px 3px"></div>
<svg class="a" style="left:186px;top:683px;" width="16" height="16" viewBox="0 0 16 16"><rect x="0.5" y="1.5" width="14" height="12" fill="#f4f6fa" stroke="#3e4e6e"/><rect x="1" y="2" width="13" height="2" fill="#5a8ae0"/><path d="M3 6.5h3M7 6.5h5" stroke="#3a4a8a"/><rect x="1" y="9" width="13" height="3" fill="#3ac83a"/><path d="M10 11l2.5 2.5l2.5-2.5l-2.5-2.5z" fill="#e070e0"/></svg>
<div class="t" style="left:205.2px;top:682.74px;font-size:12px;color:#000;">Autos</div>
<svg class="a" style="left:246px;top:683px;" width="16" height="16" viewBox="0 0 16 16"><rect x="1.5" y="1.5" width="13" height="11" fill="#f4f6fa" stroke="#3e4e6e"/><rect x="2" y="2" width="12" height="2" fill="#5a8ae0"/><path d="M4 6.5h2M7 6.5h5M4 8.5h2M7 8.5h5" stroke="#3a4a8a"/><path d="M0 12l3-3l3 3l-3 3z" fill="#e070e0"/><path d="M9 11l3-3l3 3l-3 3z" fill="#f2c53e"/></svg>
<div class="t" style="left:266.2px;top:682.74px;font-size:12px;color:#fff;transform:scaleX(0.9427);transform-origin:0 0;">Locals</div>
<svg class="a" style="left:309px;top:683px;" width="16" height="16" viewBox="0 0 16 16"><rect x="3.5" y="0.5" width="10" height="14" fill="#f4f6fa" stroke="#5a6a8a"/><path d="M5 3.5h6M5 5.5h6" stroke="#3a5aa0"/><path d="M0 11c3-4 5 3 8-1s5 0 8 0" fill="none" stroke="#3a6ad8" stroke-width="1.2"/><path d="M8 10c3-3 5 2 8 0" fill="none" stroke="#e03a3a" stroke-width="1.2"/></svg>
<div class="t" style="left:329.8px;top:682.74px;font-size:12px;color:#fff;transform:scaleX(0.9312);transform-origin:0 0;">Threads</div>
<svg class="a" style="left:382px;top:683px;" width="16" height="16" viewBox="0 0 16 16"><rect x="0.5" y="1.5" width="14" height="12" fill="#f4f6fa" stroke="#3e4e6e"/><rect x="1" y="2" width="13" height="2" fill="#5a8ae0"/><path d="M3 9l2-2l2 2l-2 2z" fill="#f2c53e"/><path d="M6 9l2-2l2 2l-2 2z" fill="#e070e0"/><path d="M9 9l2-2l2 2l-2 2z" fill="#4a8ae0"/></svg>
<div class="t" style="left:401px;top:682.74px;font-size:12px;color:#fff;transform:scaleX(1.0097);transform-origin:0 0;">Modules</div>
<svg class="a" style="left:457px;top:683px;" width="16" height="16" viewBox="0 0 16 16"><rect x="1.5" y="0.5" width="13" height="11" fill="#f4f6fa" stroke="#3e4e6e"/><rect x="2" y="1" width="12" height="2" fill="#5a8ae0"/><path d="M4 5.5h2M7 5.5h5M4 7.5h2M7 7.5h5" stroke="#3a4a8a"/><circle cx="4" cy="13" r="2.5" fill="#888"/><circle cx="11" cy="13" r="2.5" fill="#888"/></svg>
<div class="t" style="left:476.7px;top:682.74px;font-size:12px;color:#fff;transform:scaleX(0.9707);transform-origin:0 0;">Watch 1</div>
<div class="a" style="left:770px;top:679px;width:81px;height:20px;background:#fff;border-radius:0 0 3px 3px"></div>
<svg class="a" style="left:774px;top:683px;" width="16" height="16" viewBox="0 0 16 16"><rect x="4.5" y="0.5" width="7" height="6" fill="#f4f6fa" stroke="#8a9ab8"/><rect x="6.5" y="3.5" width="7" height="6" fill="#f4f6fa" stroke="#8a9ab8"/><rect x="8.5" y="7.5" width="7" height="6" fill="#e8eef8" stroke="#7a8aa8"/><path d="M4 6.5C0.5 7.5 0.5 12 3.5 13" fill="none" stroke="#3a6ad8" stroke-width="1.6"/><path d="M2.5 10.5l4 3l-4 2.5z" fill="#2a5ad0"/></svg>
<div class="t" style="left:795.2px;top:682.74px;font-size:12px;color:#000;transform:scaleX(0.9383);transform-origin:0 0;">Call Stack</div>
<svg class="a" style="left:856px;top:683px;" width="16" height="16" viewBox="0 0 16 16"><defs><radialGradient id="rb" cx="0.35" cy="0.35" r="0.7"><stop offset="0" stop-color="#ff9a8a"/><stop offset="0.5" stop-color="#d8281a"/><stop offset="1" stop-color="#8a1008"/></radialGradient></defs><rect x="0.5" y="0.5" width="13" height="12" fill="#f4f6fa" stroke="#5a6a8a"/><rect x="1" y="1" width="12" height="2" fill="#5a8ae0"/><circle cx="11" cy="11.5" r="4.5" fill="url(#rb)"/></svg>
<div class="t" style="left:876.3px;top:682.74px;font-size:12px;color:#fff;transform:scaleX(0.9736);transform-origin:0 0;">Breakpoints</div>
<svg class="a" style="left:948px;top:683px;" width="16" height="16" viewBox="0 0 16 16"><rect x="1.5" y="1.5" width="12" height="12" fill="#eef2fa" stroke="#6a7ab0"/><rect x="2" y="2" width="11" height="1.5" fill="#5a8ae0"/><path d="M4 5.5h7M4 7.5h5M4 9.5h7M4 11.5h5" stroke="#4a5a90"/></svg>
<div class="t" style="left:968.6px;top:682.74px;font-size:12px;color:#fff;transform:scaleX(1.0269);transform-origin:0 0;">Output</div>
<div class="t" style="left:4.6px;top:710.84px;font-size:12px;color:#fff;transform:scaleX(0.8937);transform-origin:0 0;">Ready</div>
<div class="t" style="left:1012.6px;top:710.84px;font-size:12px;color:#fff;transform:scaleX(0.8776);transform-origin:0 0;">Ln 8</div>
<div class="t" style="left:1104.3px;top:710.84px;font-size:12px;color:#fff;transform:scaleX(0.9312);transform-origin:0 0;">Col 29</div>
<div class="t" style="left:1196.5px;top:710.84px;font-size:12px;color:#fff;transform:scaleX(0.9147);transform-origin:0 0;">Ch 29</div>
<div class="t" style="left:1332px;top:710.84px;font-size:12px;color:#fff;transform:scaleX(0.8993);transform-origin:0 0;">INS</div>
<div class="a" style="left:6px;top:662px;width:168px;height:17px;background:#ebebeb"></div>
<svg class="a" style="left:13px;top:666px;" width="5" height="8" viewBox="0 0 5 8"><path d="M4.5 0V8L0 4Z" fill="#333"/></svg>
<div class="a" style="left:25px;top:662px;width:84px;height:15px;border:1px solid #8a8a8a;border-radius:2px;background:linear-gradient(#f4f4f4,#e6e6e6 50%,#d2d2d2)"></div>
<svg class="a" style="left:62px;top:666px;" width="8" height="8" viewBox="0 0 8 8"><path d="M1.5 1v6M3.5 1v6M5.5 1v6" stroke="#444"/></svg>
<svg class="a" style="left:163px;top:666px;" width="5" height="8" viewBox="0 0 5 8"><path d="M0 0V8L4.5 4Z" fill="#333"/></svg>
</body></html>
